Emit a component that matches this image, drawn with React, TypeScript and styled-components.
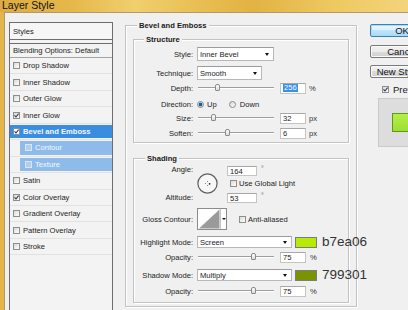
import React from "react";
import styled, { createGlobalStyle } from "styled-components";

const GlobalStyle = createGlobalStyle`
  html, body { margin: 0; padding: 0; background: #f0f0f0; }
  body { font-family: "Liberation Sans", Arial, sans-serif; }
`;

const Window = styled.div`
  width: 408px;
  height: 310px;
  overflow: hidden;
  display: flex;
  flex-direction: column;
  background: #e4b54a;
  font-family: "Liberation Sans", Arial, sans-serif;
  font-size: 7.6px;
  color: #1c1c1c;
`;

const TitleBar = styled.div`
  height: 12px;
  flex: none;
  display: flex;
  align-items: flex-end;
  box-sizing: border-box;
  padding: 0 0 2px 2px;
  background: linear-gradient(
    90deg,
    #ddac43 0%,
    #e6b84b 18%,
    #f0cf6e 33%,
    #e9bf55 48%,
    #e2b243 62%,
    #eec961 82%,
    #f3d47c 100%
  );
`;

const TitleText = styled.span`
  font-size: 10.5px;
  line-height: 1;
  color: #111;
`;

const Frame = styled.div`
  flex: 1;
  display: flex;
  padding-left: 4px;
  min-height: 0;
`;

const Body = styled.div`
  flex: 1;
  display: flex;
  align-items: flex-start;
  background: #f0f0f0;
  border-left: 1px solid #b09a6c;
  border-top: 1px solid #b09a6c;
  overflow: hidden;
`;

/* ---------- left styles list ---------- */

const StylesPanel = styled.div`
  flex: none;
  width: 104px;
  height: 320px;
  margin: 9px 0 0 4px;
  box-sizing: border-box;
  border: 1px solid #6e6e6e;
  background: #f3f3f3;
  display: flex;
  flex-direction: column;
`;

const PanelHeader = styled.div`
  height: 16px;
  display: flex;
  align-items: center;
  padding-left: 3px;
  border-bottom: 1px solid #6e6e6e;
  background: #f6f6f6;
`;

const BlendRow = styled.div`
  height: 13px;
  margin-top: 3px;
  display: flex;
  align-items: center;
  padding-left: 3px;
  border-top: 1px solid #6e6e6e;
  border-bottom: 1px solid #a3a3a3;
`;

const StyleRow = styled.div`
  height: 16.45px;
  box-sizing: border-box;
  display: flex;
  align-items: center;
  border-bottom: 1px solid #e2e2e2;
`;

type Tone = "plain" | "active" | "sub";

const StyleItem = styled.div<{ $tone: Tone; $indent: number }>`
  flex: 1;
  height: 13.5px;
  margin-left: ${(p) => p.$indent}px;
  display: flex;
  align-items: center;
  padding-left: ${(p) => (p.$indent ? 5 : 3)}px;
  gap: 3px;
  background: ${(p) =>
    p.$tone === "active" ? "#3a8de0" : p.$tone === "sub" ? "#8fbbea" : "transparent"};
  color: ${(p) => (p.$tone === "plain" ? "#1c1c1c" : "#f4f8fd")};
  font-weight: ${(p) => (p.$tone === "active" ? 700 : 400)};
`;

const Box = styled.span<{ $tone?: Tone }>`
  flex: none;
  width: 7px;
  height: 7px;
  box-sizing: border-box;
  display: flex;
  align-items: center;
  justify-content: center;
  border: 1px solid ${(p) => (p.$tone === "sub" ? "#d6e5f6" : "#8e8e8e")};
  background: ${(p) =>
    p.$tone === "sub"
      ? "#b4cfee"
      : p.$tone === "active"
      ? "#ffffff"
      : "linear-gradient(135deg, #d9d9d9, #ffffff)"};
`;

const Check = ({ on, tone }: { on?: boolean; tone?: Tone }) => (
  <Box $tone={tone}>
    {on && (
      <svg width="5" height="5" viewBox="0 0 5 5">
        <path d="M0.5 2.4 L2 4 L4.6 0.6" fill="none" stroke="#2b3a55" strokeWidth="1.1" />
      </svg>
    )}
  </Box>
);

/* ---------- main group ---------- */

const Group = styled.div<{ $w?: number; $h: number; $mt: number; $ml?: number }>`
  position: relative;
  flex: none;
  box-sizing: border-box;
  ${(p) => (p.$w ? `width: ${p.$w}px;` : "")}
  height: ${(p) => p.$h}px;
  margin-top: ${(p) => p.$mt}px;
  ${(p) => (p.$ml ? `margin-left: ${p.$ml}px;` : "")}
  border: 1px solid #c3c3c3;
  box-shadow: inset 1px 1px 0 #ffffff, 1px 1px 0 #ffffff;
  display: flex;
  flex-direction: column;
`;

const MainGroup = styled(Group)`
  padding: 0 7px;
`;

const Legend = styled.span<{ $left: number }>`
  position: absolute;
  top: -6px;
  left: ${(p) => p.$left}px;
  padding: 0 2px;
  line-height: 11px;
  font-weight: 700;
  color: #1a1a1a;
  background: #f0f0f0;
`;

const FormRow = styled.div<{ $h: number; $mt: number }>`
  flex: none;
  height: ${(p) => p.$h}px;
  margin-top: ${(p) => p.$mt}px;
  display: flex;
  align-items: center;
`;

const Label = styled.span`
  flex: none;
  width: 59px;
  margin-right: 4px;
  text-align: right;
  white-space: nowrap;
`;

const Select = styled.div<{ $w: number }>`
  flex: none;
  width: ${(p) => p.$w}px;
  height: 100%;
  box-sizing: border-box;
  display: flex;
  align-items: center;
  justify-content: space-between;
  padding-left: 2px;
  background: #ffffff;
  border: 1px solid #b8b8b8;
  border-top-color: #9c9c9c;
`;

const Arrow = styled.span`
  width: 0;
  height: 0;
  margin-right: 4px;
  border-left: 2.5px solid transparent;
  border-right: 2.5px solid transparent;
  border-top: 3px solid #111;
`;

const Track = styled.div`
  position: relative;
  flex: none;
  width: 77px;
  height: 12px;
  display: flex;
  align-items: center;
`;

const TrackLine = styled.div`
  margin-left: 1px;
  flex: 1;
  height: 1px;
  background: #9d9d9d;
  border-bottom: 1px solid #ffffff;
`;

const Thumb = styled.span<{ $x: number }>`
  position: absolute;
  left: ${(p) => p.$x - 2.5}px;
  top: 2px;
  width: 5px;
  height: 7px;
  box-sizing: border-box;
  border: 1px solid #8a8a8a;
  border-radius: 2px 2px 1px 1px;
  background: linear-gradient(#ffffff, #dcdcdc);
`;

const Field = styled.div<{ $w: number; $ml: number; $h?: number }>`
  flex: none;
  width: ${(p) => p.$w}px;
  height: ${(p) => p.$h ?? 11}px;
  margin-left: ${(p) => p.$ml}px;
  box-sizing: border-box;
  display: flex;
  align-items: center;
  padding-left: 2px;
  background: #ffffff;
  border: 1px solid #c4c4c4;
  border-top-color: #a8a8a8;
`;

const Selected = styled.span`
  background: #3a8fe6;
  color: #ffffff;
  padding: 0 1px;
  line-height: 8px;
`;

const Unit = styled.span<{ $ml?: number }>`
  margin-left: ${(p) => p.$ml ?? 3}px;
  color: #333;
`;

const Radio = styled.span<{ $on?: boolean; $ml?: number }>`
  flex: none;
  width: 7px;
  height: 7px;
  margin-left: ${(p) => p.$ml ?? 0}px;
  box-sizing: border-box;
  border-radius: 50%;
  border: 1px solid #8a8a8a;
  background: ${(p) =>
    p.$on
      ? "radial-gradient(circle, #1d5d9c 0 1.5px, #cfe4f6 2.2px)"
      : "linear-gradient(135deg, #d4d4d4, #ffffff)"};
`;

const Text = styled.span<{ $ml?: number }>`
  margin-left: ${(p) => p.$ml ?? 3}px;
  white-space: nowrap;
`;

const Slider = ({ x }: { x: number }) => (
  <Track>
    <TrackLine />
    <Thumb $x={x} />
  </Track>
);

/* ---------- shading angle block ---------- */

const AngleBlock = styled.div`
  flex: none;
  height: 41px;
  margin-top: 5px;
  display: flex;
`;

const Column = styled.div`
  display: flex;
  flex-direction: column;
`;

const LabelCol = styled(Column)`
  width: 59px;
  margin-right: 4px;
  text-align: right;
`;

const LabelLine = styled.span<{ $mt: number }>`
  height: 10px;
  line-height: 10px;
  margin-top: ${(p) => p.$mt}px;
`;

const Dial = styled.svg`
  flex: none;
  margin-top: 9px;
`;

const ControlCol = styled(Column)`
  margin-left: 9px;
`;

const MiniRow = styled.div<{ $mt: number; $ml?: number }>`
  height: 10px;
  margin-top: ${(p) => p.$mt}px;
  margin-left: ${(p) => p.$ml ?? 0}px;
  display: flex;
  align-items: center;
`;

const Degree = styled.span`
  margin-left: 4px;
  align-self: flex-start;
  font-size: 7px;
  line-height: 6px;
  color: #666;
`;

const ContourBox = styled.div`
  flex: none;
  width: 30px;
  height: 22px;
  box-sizing: border-box;
  border: 1px solid #8c8c8c;
  background: #ffffff;
  display: flex;
`;

const ContourDrop = styled.div`
  flex: 1;
  border-left: 1px solid #c6c6c6;
  display: flex;
  align-items: center;
  justify-content: center;
`;

const SmallArrow = styled.span`
  width: 0;
  height: 0;
  border-left: 2px solid transparent;
  border-right: 2px solid transparent;
  border-top: 2.5px solid #111;
`;

const Swatch = styled.span<{ $color: string }>`
  flex: none;
  width: 22px;
  height: 11px;
  margin-left: 3px;
  box-sizing: border-box;
  border: 1px solid #7c7c7c;
  background: ${(p) => p.$color};
`;

const HexNote = styled.span`
  margin-left: 5px;
  font-size: 13.5px;
  line-height: 12px;
  color: #333;
`;

/* ---------- buttons / preview ---------- */

const ButtonColumn = styled.div`
  flex: none;
  width: 64px;
  margin: 11px 0 0 13px;
  display: flex;
  flex-direction: column;
  gap: 7.5px;
  font-size: 9.5px;
`;

const Button = styled.div<{ $primary?: boolean }>`
  height: 13px;
  box-sizing: border-box;
  display: flex;
  align-items: center;
  justify-content: center;
  border-radius: 2px;
  border: 1px solid ${(p) => (p.$primary ? "#3c7fb1" : "#7a7a7a")};
  box-shadow: inset 0 0 0 1px ${(p) => (p.$primary ? "#a8dcf6" : "#fbfbfb")};
  background: ${(p) =>
    p.$primary
      ? "linear-gradient(#eaf6fd, #d9f0fc 50%, #bee6fd 50%, #a7d9f5)"
      : "linear-gradient(#f2f2f2, #ebebeb 50%, #dddddd 50%, #cfcfcf)"};
  color: #111;
`;

const PreviewRow = styled.div`
  height: 10px;
  margin-top: -1.5px;
  padding-left: 12px;
  display: flex;
  align-items: center;
  gap: 4px;
`;

const PreviewBox = styled.div`
  height: 49px;
  margin: -3.5px -10px 0 8px;
  box-sizing: border-box;
  border: 1px solid #cacaca;
  background: #dddddd;
  padding: 14px 0 0 13px;
`;

const PreviewSwatch = styled.div`
  width: 22px;
  height: 19px;
  box-sizing: border-box;
  border: 1px solid #5f9a16;
  background: linear-gradient(#b4ef4a, #9ede34);
`;

const styleItems: { name: string; on?: boolean; tone: Tone; indent?: number }[] = [
  { name: "Drop Shadow", tone: "plain" },
  { name: "Inner Shadow", tone: "plain" },
  { name: "Outer Glow", tone: "plain" },
  { name: "Inner Glow", on: true, tone: "plain" },
  { name: "Bevel and Emboss", on: true, tone: "active" },
  { name: "Contour", tone: "sub", indent: 10 },
  { name: "Texture", tone: "sub", indent: 10 },
  { name: "Satin", tone: "plain" },
  { name: "Color Overlay", on: true, tone: "plain" },
  { name: "Gradient Overlay", tone: "plain" },
  { name: "Pattern Overlay", tone: "plain" },
  { name: "Stroke", tone: "plain" },
];

const App = () => {
  return (
    <Window>
      <GlobalStyle />
      <TitleBar>
        <TitleText>Layer Style</TitleText>
      </TitleBar>
      <Frame>
        <Body>
          <StylesPanel>
            <PanelHeader>Styles</PanelHeader>
            <BlendRow>Blending Options: Default</BlendRow>
            {styleItems.map((item) => (
              <StyleRow key={item.name}>
                <StyleItem $tone={item.tone} $indent={item.indent ?? 0}>
                  <Check on={item.on} tone={item.tone} />
                  <span>{item.name}</span>
                </StyleItem>
              </StyleRow>
            ))}
          </StylesPanel>

          <MainGroup $w={232} $h={282} $mt={12} $ml={12}>
            <Legend $left={11}>Bevel and Emboss</Legend>

            <Group $h={104} $mt={13}>
              <Legend $left={10}>Structure</Legend>
              <FormRow $h={14} $mt={7}>
                <Label>Style:</Label>
                <Select $w={77}>
                  Inner Bevel
                  <Arrow />
                </Select>
              </FormRow>
              <FormRow $h={14} $mt={5}>
                <Label>Technique:</Label>
                <Select $w={65}>
                  Smooth
                  <Arrow />
                </Select>
              </FormRow>
              <FormRow $h={12} $mt={2}>
                <Label>Depth:</Label>
                <Slider x={20} />
                <Field $w={26} $ml={6}>
                  <Selected>256</Selected>
                </Field>
                <Unit>%</Unit>
              </FormRow>
              <FormRow $h={12} $mt={4}>
                <Label>Direction:</Label>
                <Radio $on />
                <Text>Up</Text>
                <Radio $ml={12} />
                <Text $ml={4}>Down</Text>
              </FormRow>
              <FormRow $h={12} $mt={2}>
                <Label>Size:</Label>
                <Slider x={16} />
                <Field $w={26} $ml={6}>32</Field>
                <Unit>px</Unit>
              </FormRow>
              <FormRow $h={12} $mt={3}>
                <Label>Soften:</Label>
                <Slider x={30} />
                <Field $w={26} $ml={6}>6</Field>
                <Unit>px</Unit>
              </FormRow>
            </Group>

            <Group $h={145} $mt={15}>
              <Legend $left={11}>Shading</Legend>
              <AngleBlock>
                <LabelCol>
                  <LabelLine $mt={1}>Angle:</LabelLine>
                  <LabelLine $mt={18}>Altitude:</LabelLine>
                </LabelCol>
                <Dial width="21" height="21" viewBox="0 0 21 21">
                  <circle cx="10.5" cy="10.5" r="9.6" fill="#f7f7f7" stroke="#5e5e5e" strokeWidth="1.2" />
                  <path d="M8 10.5h1M10.5 8v1M10.5 12v1" stroke="#777" strokeWidth="0.9" />
                  <circle cx="12.6" cy="10.8" r="0.9" fill="#222" />
                </Dial>
                <ControlCol>
                  <MiniRow $mt={2}>
                    <Field $w={30} $ml={0} $h={10}>164</Field>
                    <Degree>°</Degree>
                  </MiniRow>
                  <MiniRow $mt={2} $ml={3}>
                    <Check />
                    <Text $ml={2}>Use Global Light</Text>
                  </MiniRow>
                  <MiniRow $mt={5}>
                    <Field $w={30} $ml={0} $h={10}>53</Field>
                    <Degree>°</Degree>
                  </MiniRow>
                </ControlCol>
              </AngleBlock>

              <FormRow $h={22} $mt={3}>
                <Label>Gloss Contour:</Label>
                <ContourBox>
                  <svg width="22" height="20" viewBox="0 0 22 20">
                    <polygon points="1,19.5 21.5,0.5 21.5,19.5" fill="#9a9a9a" />
                  </svg>
                  <ContourDrop>
                    <SmallArrow />
                  </ContourDrop>
                </ContourBox>
                <MiniRow $mt={0} $ml={12}>
                  <Check />
                  <Text $ml={2}>Anti-aliased</Text>
                </MiniRow>
              </FormRow>

              <FormRow $h={12} $mt={6}>
                <Label>Highlight Mode:</Label>
                <Select $w={95}>
                  Screen
                  <Arrow />
                </Select>
                <Swatch $color="#b7ea06" />
                <HexNote>b7ea06</HexNote>
              </FormRow>
              <FormRow $h={12} $mt={3}>
                <Label>Opacity:</Label>
                <Slider x={56} />
                <Field $w={26} $ml={6}>75</Field>
                <Unit $ml={4}>%</Unit>
              </FormRow>
              <FormRow $h={12} $mt={6}>
                <Label>Shadow Mode:</Label>
                <Select $w={95}>
                  Multiply
                  <Arrow />
                </Select>
                <Swatch $color="#799301" />
                <HexNote>799301</HexNote>
              </FormRow>
              <FormRow $h={12} $mt={4}>
                <Label>Opacity:</Label>
                <Slider x={56} />
                <Field $w={26} $ml={6}>75</Field>
                <Unit $ml={4}>%</Unit>
              </FormRow>
            </Group>
          </MainGroup>

          <ButtonColumn>
            <Button $primary>OK</Button>
            <Button>Cancel</Button>
            <Button>New Style...</Button>
            <PreviewRow>
              <Check on />
              <span>Preview</span>
            </PreviewRow>
            <PreviewBox>
              <PreviewSwatch />
            </PreviewBox>
          </ButtonColumn>
        </Body>
      </Frame>
    </Window>
  );
};

export default App;
